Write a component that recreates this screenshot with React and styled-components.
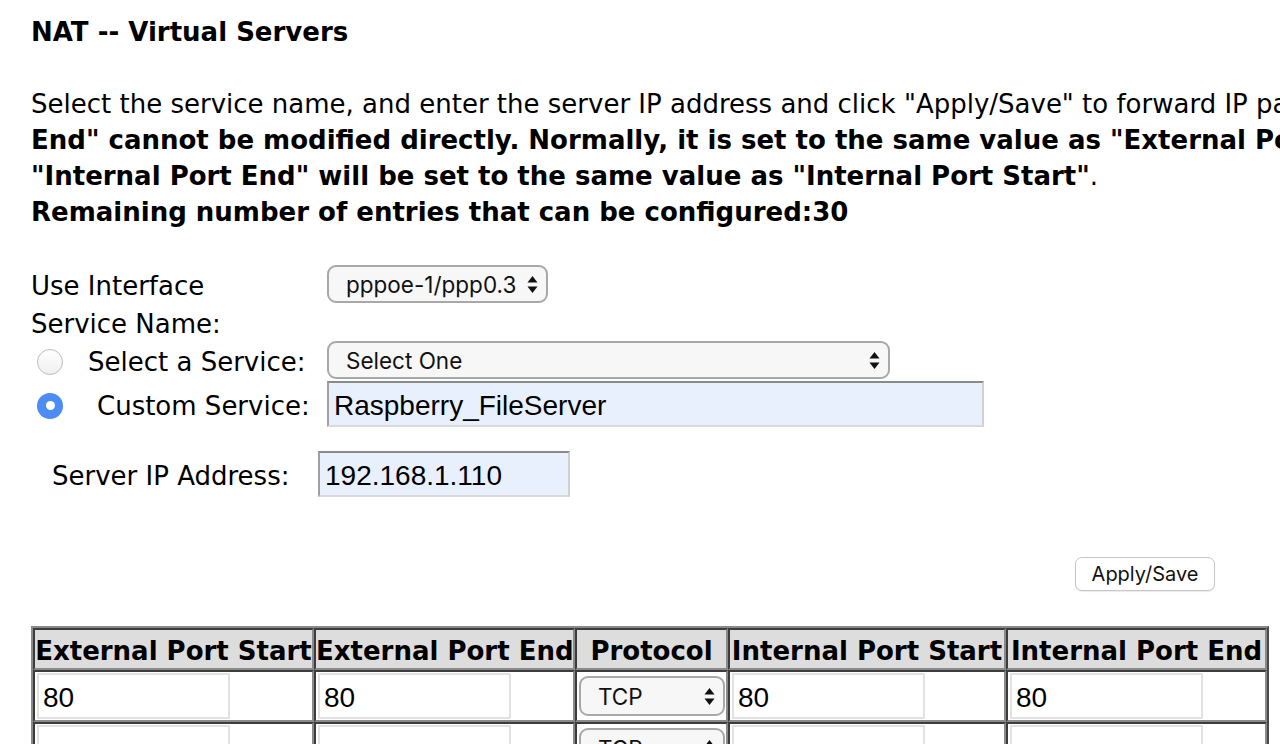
import React from 'react';
import styled, { createGlobalStyle } from 'styled-components';

const GlobalStyle = createGlobalStyle`
   html, body {
      margin: 0;
      padding: 0;
      background: #fff;
      overflow: hidden;
   }
   body {
      font-family: "DejaVu Sans", Verdana, sans-serif;
      color: #000;
   }
`;

const Page = styled.div`
   width: 1280px;
   height: 744px;
   overflow: hidden;
   padding: 14px 0 0 31px;
   box-sizing: border-box;
`;

const Title = styled.div`
   font-weight: bold;
   font-size: 26px;
   line-height: 36px;
`;

const Intro = styled.div`
   margin-top: 36px;
   font-size: 26px;
   line-height: 36px;
   white-space: nowrap;
   b {
      font-weight: bold;
   }
`;

const Form = styled.div`
   margin-top: 35px;
   font-size: 26px;
   display: flex;
   flex-direction: column;
`;

const Row = styled.div`
   display: flex;
   align-items: center;
   height: ${({ h }) => h}px;
   margin-top: ${({ gap }) => gap || 0}px;
`;

const Label = styled.div`
   width: ${({ w }) => w}px;
   flex: none;
   white-space: nowrap;
   padding: 3px 0 0 ${({ pad }) => pad || 0}px;
   box-sizing: border-box;
`;

const Radio = styled.span`
   width: 26px;
   height: 26px;
   border-radius: 50%;
   box-sizing: border-box;
   margin: 3px 0 0 6px;
   flex: none;
   display: inline-flex;
   align-items: center;
   justify-content: center;
   border: ${({ checked }) => (checked ? 'none' : '1.5px solid #bcbcbc')};
   background: ${({ checked }) => (checked ? '#4d8cf5' : 'linear-gradient(#fff, #efefef)')};
   &::after {
      content: '';
      display: ${({ checked }) => (checked ? 'block' : 'none')};
      width: 9px;
      height: 9px;
      border-radius: 50%;
      background: #fff;
   }
`;

const SelectBox = styled.div`
   width: ${({ w }) => w}px;
   height: ${({ h }) => h || 38}px;
   box-sizing: border-box;
   border: 2px solid #a8a8a8;
   border-radius: 9px;
   background: #f7f7f7;
   display: flex;
   align-items: center;
   justify-content: space-between;
   padding: 0 8px 0 ${({ pl }) => pl || 16}px;
   font-family: Inter, "Liberation Sans", Arial, sans-serif;
   font-size: 22.5px;
   color: #111;
   flex: none;
`;

const Arrows = () => (
   <svg width="11" height="19" viewBox="0 0 11 19">
      <path d="M5.5 1 L10.5 7.5 L0.5 7.5 Z" fill="#111" />
      <path d="M5.5 18 L10.5 11.5 L0.5 11.5 Z" fill="#111" />
   </svg>
);

const TextInput = styled.input`
   width: ${({ w }) => w}px;
   height: 46px;
   box-sizing: border-box;
   font-family: "Liberation Sans", Arial, sans-serif;
   font-size: 28px;
   color: #000;
   padding: 4px 5px 0;
   margin: 0;
   background: ${({ filled }) => (filled ? '#e8f0fe' : '#fff')};
   border-style: solid;
   border-width: 2px;
   border-color: #8a8a8a #d0d0d0 #dadada #a0a0a0;
   outline: none;
`;

const ButtonRow = styled.div`
   width: 1184px;
   display: flex;
   justify-content: flex-end;
   margin-top: 60px;
`;

const Button = styled.button`
   height: 34px;
   width: 140px;
   border: 1.5px solid #c6c6c6;
   border-radius: 7px;
   background: #fff;
   font-family: Inter, "Liberation Sans", Arial, sans-serif;
   font-size: 20px;
   color: #111;
   padding: 0;
   box-shadow: 0 1px 1px rgba(0, 0, 0, 0.08);
`;

const Table = styled.table`
   margin-top: 35px;
   border-collapse: separate;
   border-spacing: 0;
   table-layout: fixed;
   width: 1234px;
   border: 2px solid;
   border-color: #8a8a8a #4a4a4a #4a4a4a #8a8a8a;
`;

const Th = styled.th`
   background: #dddddd;
   font-size: 26px;
   font-weight: bold;
   height: 34px;
   padding: 4px 0 0;
   white-space: nowrap;
   overflow: hidden;
   border: 2px solid;
   border-color: #3c3c3c #8a8a8a #8a8a8a #3c3c3c;
   text-align: center;
   line-height: 30px;
`;

const Td = styled.td`
   height: 52px;
   padding: 0 2px;
   border: 2px solid;
   border-color: #3c3c3c #8a8a8a #8a8a8a #3c3c3c;
   box-sizing: border-box;
   vertical-align: middle;
`;

const CellInput = styled.input`
   width: 193px;
   height: 46px;
   box-sizing: border-box;
   border: 2px solid #e2e2e2;
   font-family: "Liberation Sans", Arial, sans-serif;
   font-size: 28px;
   padding: 4px 4px 0;
   margin: 0;
   background: #fff;
   outline: none;
`;

const columns = [
   { title: 'External Port Start', width: 281 },
   { title: 'External Port End', width: 261 },
   { title: 'Protocol', width: 153 },
   { title: 'Internal Port Start', width: 278 },
   { title: 'Internal Port End', width: 261 },
];

const rules = [
   { start: '80', end: '80', proto: 'TCP', inStart: '80', inEnd: '80' },
   { start: '', end: '', proto: 'TCP', inStart: '', inEnd: '' },
];

const App = () => (
   <Page>
      <GlobalStyle />
      <Title>NAT -- Virtual Servers</Title>
      <Intro>
         Select the service name, and enter the server IP address and click "Apply/Save" to forward IP packets for this service to the specified server. <b>NOTE: The "Internal Port</b>
         <br />
         <b>End" cannot be modified directly. Normally, it is set to the same value as "External Port End". However, if you modify "Internal Port Start", then</b>
         <br />
         <b>"Internal Port End" will be set to the same value as "Internal Port Start"</b>.
         <br />
         <b>Remaining number of entries that can be configured:30</b>
      </Intro>

      <Form>
         <Row h={38}>
            <Label w={296}>Use Interface</Label>
            <SelectBox w={221} pl={17}>
               <span>pppoe-1/ppp0.3</span>
               <Arrows />
            </SelectBox>
         </Row>
         <Row h={38}>
            <Label w={296}>Service Name:</Label>
         </Row>
         <Row h={38}>
            <Radio />
            <Label w={264} pad={25}>Select a Service:</Label>
            <SelectBox w={563} pl={17}>
               <span>Select One</span>
               <Arrows />
            </SelectBox>
         </Row>
         <Row h={50}>
            <Radio checked />
            <Label w={264} pad={34}>Custom Service:</Label>
            <TextInput w={657} filled defaultValue="Raspberry_FileServer" />
         </Row>
         <Row h={46} gap={22}>
            <Label w={287} pad={21}>Server IP Address:</Label>
            <TextInput w={252} filled defaultValue="192.168.1.110" />
         </Row>
      </Form>

      <ButtonRow>
         <Button>Apply/Save</Button>
      </ButtonRow>

      <Table>
         <colgroup>
            {columns.map((c) => (
               <col key={c.title} style={{ width: c.width }} />
            ))}
         </colgroup>
         <thead>
            <tr>
               {columns.map((c) => (
                  <Th key={c.title}>{c.title}</Th>
               ))}
            </tr>
         </thead>
         <tbody>
            {rules.map((r, i) => (
               <tr key={i}>
                  <Td><CellInput defaultValue={r.start} /></Td>
                  <Td><CellInput defaultValue={r.end} /></Td>
                  <Td>
                     <SelectBox w={146} h={40} pl={17}>
                        <span>{r.proto}</span>
                        <Arrows />
                     </SelectBox>
                  </Td>
                  <Td><CellInput defaultValue={r.inStart} /></Td>
                  <Td><CellInput defaultValue={r.inEnd} /></Td>
               </tr>
            ))}
         </tbody>
      </Table>
   </Page>
);

export default App;
